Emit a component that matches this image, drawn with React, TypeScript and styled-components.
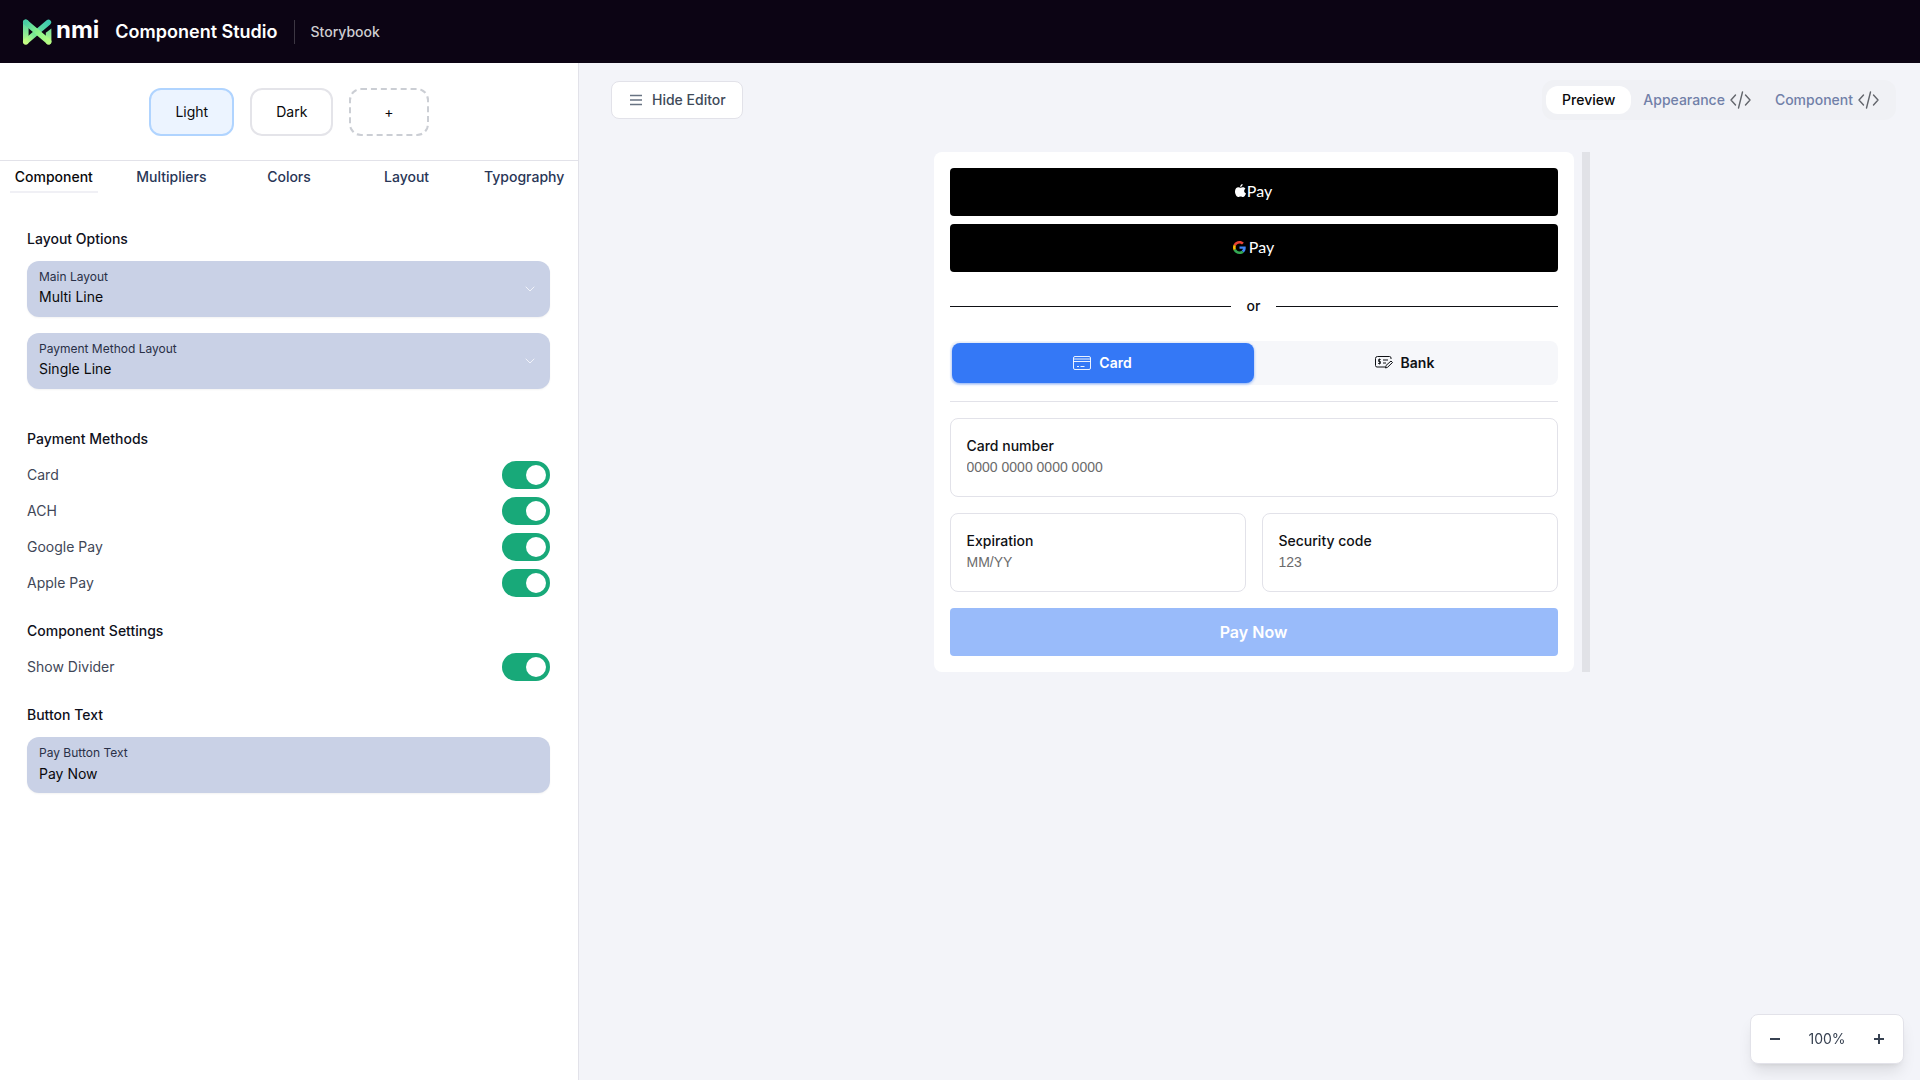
import React, { useState } from "react";
import styled, { createGlobalStyle, css } from "styled-components";

const GlobalStyle = createGlobalStyle`
  *, *::before, *::after { box-sizing: border-box; }
  body { margin: 0; background: #f3f4f9; color: #09090b; font: 400 14px/20px Inter, "Liberation Sans", sans-serif; }
  button, input, select { font: inherit; color: inherit; margin: 0; }
  button { cursor: pointer; }
`;

const Page = styled.div`
  min-height: 100vh;
  display: flex;
  flex-direction: column;
`;

const Header = styled.header`
  display: flex;
  align-items: center;
  height: 63px;
  padding: 0 22px;
  background: #0c0414;
  color: #fff;
`;

const Brand = styled.a`
  display: flex;
  align-items: center;
  gap: 2px;
  margin-right: 16px;
  color: inherit;
  text-decoration: none;
`;

const Wordmark = styled.span`
  margin-bottom: 4px;
  font-size: 24px;
  line-height: 28px;
  font-weight: 700;
`;

const Title = styled.h1`
  margin: 0;
  font-size: 18px;
  line-height: 28px;
  font-weight: 600;
`;

const HeaderLink = styled.a`
  margin-left: 16px;
  padding-left: 16px;
  line-height: 24px;
  border-left: 1px solid #3d3743;
  color: #cecdd0;
  font-weight: 500;
  text-decoration: none;
`;

const Body = styled.div`
  flex: 1;
  display: flex;
`;

const Editor = styled.aside`
  flex: none;
  width: 579px;
  background: #fff;
  border-right: 1px solid #e2e2e9;
`;

const Themes = styled.div`
  display: flex;
  justify-content: center;
  gap: 16px;
  padding: 25px 0 24px;
  border-bottom: 1px solid #e2e2e9;
`;

const ThemeButton = styled.button<{ $kind?: "active" | "add" }>`
  height: 48px;
  padding: 0 24px;
  border: 2px solid #e4e4e9;
  border-radius: 12px;
  background: #fff;
  ${(p) => p.$kind === "active" && css`border-color: #b0d4ff; background: #ecf4ff;`}
  ${(p) => p.$kind === "add" && css`border: 2px dashed #cbced4; padding: 0 33px;`}
`;

const Tabs = styled.nav`
  display: grid;
  grid-template-columns: repeat(5, 1fr);
  justify-items: center;
  margin: 0 -5px;
`;

const Tab = styled.button<{ $active?: boolean }>`
  padding: 6px 5px 4px;
  line-height: 20px;
  border: 0;
  border-bottom: 2px solid ${(p) => (p.$active ? "#f0f0f5" : "transparent")};
  background: none;
  color: ${(p) => (p.$active ? "#09090b" : "#293656")};
  font-weight: 500;
`;

const Settings = styled.div`
  padding: 36px 28px 0 27px;
`;

const Section = styled.section<{ $space?: number }>`
  margin-bottom: ${(p) => p.$space ?? 24}px;
`;

const SectionTitle = styled.h2`
  margin: 0 0 12px;
  font-size: 14px;
  line-height: 20px;
  font-weight: 500;
  color: #0f111c;
`;

const FieldBox = styled.div`
  display: grid;
  position: relative;
  height: 56px;
  margin-bottom: 16px;
  border-radius: 12px;
  background: #c9d1e6;
  box-shadow: 0 1px 2px #0000000d;

  label {
    grid-area: 1 / 1;
    padding: 8px 12px 0;
    font-size: 12px;
    line-height: 16px;
    color: #293047;
    pointer-events: none;
    z-index: 1;
  }
  select, input {
    grid-area: 1 / 1;
    width: 100%;
    height: 56px;
    padding: 16px 12px 0;
    border: 0;
    border-radius: 12px;
    background: transparent;
    appearance: none;
  }
  svg {
    grid-area: 1 / 1;
    place-self: center end;
    margin-right: 14px;
    pointer-events: none;
  }
`;

const SwitchRow = styled.label`
  display: flex;
  align-items: center;
  justify-content: space-between;
  height: 28px;
  margin-bottom: 8px;
  color: #3f4757;
`;

const Switch = styled.input`
  appearance: none;
  display: flex;
  justify-content: flex-start;
  align-items: center;
  width: 48px;
  height: 28px;
  padding: 4px;
  border-radius: 14px;
  background: #c9d1e6;
  cursor: pointer;
  &::before {
    content: "";
    width: 20px;
    height: 20px;
    border-radius: 50%;
    background: #fff;
  }
  &:checked { background: #18a979; justify-content: flex-end; }
`;

const Main = styled.main`
  flex: 1;
  min-width: 0;
  padding: 17px 24px 24px 32px;
  display: flex;
  flex-direction: column;
`;

const Toolbar = styled.div`
  display: flex;
  justify-content: space-between;
  align-items: center;
`;

const HideButton = styled.button`
  display: flex;
  align-items: center;
  gap: 8px;
  height: 38px;
  padding: 0 16px;
  border: 1px solid #e2e2e9;
  border-radius: 8px;
  background: #fff;
  color: #404a59;
  font-weight: 500;
`;

const Views = styled.div`
  display: flex;
  align-items: center;
  height: 40px;
  padding: 0 5px 0 4px;
  border-radius: 12px;
  background: #f0f1f5;
`;

const ViewButton = styled.button<{ $active?: boolean }>`
  display: flex;
  align-items: center;
  gap: 5px;
  height: 28px;
  padding: ${(p) => (p.$active ? "0 16px" : "0 12px")};
  border: 0;
  border-radius: 12px;
  background: ${(p) => (p.$active ? "#fff" : "none")};
  color: ${(p) => (p.$active ? "#09090b" : "#7180a8")};
  font-weight: 500;
`;

const Stage = styled.div`
  display: flex;
  justify-content: center;
  gap: 8px;
  margin: 32px 0 0 16px;
`;

const Checkout = styled.form`
  flex: 0 1 640px;
  padding: 16px;
  border-radius: 8px;
  background: #fff;
  color: #0f1115;
`;

const ResizeHandle = styled.div`
  width: 8px;
  background: #e1e2e7;
`;

const WalletButton = styled.button`
  display: flex;
  align-items: center;
  justify-content: center;
  gap: 3px;
  width: 100%;
  height: 48px;
  padding: 0 0 2px;
  margin-bottom: 8px;
  border: 0;
  border-radius: 4px;
  background: #000;
  color: #fff;
  font-family: Lato, "Liberation Sans", sans-serif;
  font-size: 16px;
`;

const AppleLabel = styled.span`
  display: flex;
  align-items: center;
  gap: 1px;
`;

const Divider = styled.div`
  display: flex;
  align-items: center;
  gap: 16px;
  height: 20px;
  margin: 24px 0 25px;
  font-weight: 500;
  &::before, &::after { content: ""; flex: 1; height: 1px; background: #0f1115; }
`;

const Methods = styled.div`
  display: grid;
  grid-template-columns: 1fr 1fr;
  height: 44px;
  padding: 2px;
  border-radius: 8px;
  background: #f6f7fa;
`;

const MethodButton = styled.button<{ $active?: boolean }>`
  display: flex;
  align-items: center;
  justify-content: center;
  gap: 8px;
  border: 0;
  border-radius: 8px;
  font-weight: 600;
  background: ${(p) => (p.$active ? "#3478f6" : "none")};
  color: ${(p) => (p.$active ? "#fff" : "#0f1115")};
  box-shadow: ${(p) => (p.$active ? "0 1px 3px #3478f699" : "none")};
`;

const Rule = styled.hr`
  margin: 16px 0;
  border: 0;
  height: 1px;
  background: #e2e2e9;
`;

const Fields = styled.div`
  display: grid;
  grid-template-columns: 1fr 1fr;
  gap: 16px;
  margin-bottom: 16px;
`;

const PaymentField = styled.label<{ $wide?: boolean }>`
  display: block;
  height: 79px;
  padding: 17px 16px 0;
  border: 1px solid #e2e2e9;
  border-radius: 8px;
  font-weight: 500;
  grid-column: ${(p) => (p.$wide ? "1 / -1" : "auto")};

  input {
    display: block;
    width: 100%;
    height: 21px;
    padding: 0;
    border: 0;
    outline: 0;
    background: none;
    font-family: "Liberation Sans", Arial, sans-serif;
    font-weight: 400;
  }
  input::placeholder { color: #6b6b6b; opacity: 1; }
`;

const PayButton = styled.button`
  display: block;
  width: 100%;
  height: 48px;
  border: 0;
  border-radius: 4px;
  background: #99bbfa;
  color: #fff;
  font-size: 16px;
  font-weight: 600;
`;

const Zoom = styled.div`
  position: fixed;
  right: 16px;
  bottom: 16px;
  display: flex;
  align-items: center;
  justify-content: space-between;
  width: 154px;
  height: 50px;
  padding: 0 8px;
  border: 1px solid #e2e2e9;
  border-radius: 8px;
  background: #fff;
  color: #374151;
  box-shadow: 0 10px 15px -3px #0000001a, 0 4px 6px -4px #0000001a;
`;

const ZoomButton = styled.button`
  display: grid;
  place-items: center;
  width: 32px;
  height: 32px;
  padding: 0;
  border: 0;
  background: none;
`;

const LogoMark = () => (
  <svg width="32" height="28" viewBox="0 0 32 28" aria-hidden="true">
    <defs>
      <linearGradient id="bar" gradientUnits="userSpaceOnUse" x1="0" y1="1" x2="0" y2="27">
        <stop offset="0" stopColor="#45cfa9" />
        <stop offset="1" stopColor="#c4fd82" />
      </linearGradient>
      <linearGradient id="rise" gradientUnits="userSpaceOnUse" x1="26" y1="4" x2="4" y2="24">
        <stop offset="0" stopColor="#3fcbb0" />
        <stop offset=".6" stopColor="#6fe597" />
        <stop offset="1" stopColor="#c4fd82" />
      </linearGradient>
      <linearGradient id="fall" gradientUnits="userSpaceOnUse" x1="4" y1="4" x2="27" y2="24">
        <stop offset="0" stopColor="#48cda6" />
        <stop offset=".5" stopColor="#8af58b" />
        <stop offset="1" stopColor="#b5fc83" />
      </linearGradient>
    </defs>
    <path d="M1 4.300a2.800 2.800 0 0 1 5.600 0v19.400a2.800 2.800 0 0 1-5.600 0Z" fill="url(#bar)" />
    <path d="M29.400 10.500v13.200a2.800 2.800 0 0 1-5.600 0v-9Z" fill="url(#bar)" />
    <path d="M3.800 23.700 26.400 4.300" stroke="url(#rise)" strokeWidth="5.500" strokeLinecap="round" />
    <path d="M3.800 4.300 26.600 23.700" stroke="url(#fall)" strokeWidth="5.500" strokeLinecap="round" />
  </svg>
);

const Chevron = () => (
  <svg width="12" height="12" viewBox="0 0 12 12" fill="none" stroke="#f1f3fa" strokeLinecap="round" strokeLinejoin="round">
    <path d="m2 4 4 4 4-4" />
  </svg>
);

const MenuIcon = () => (
  <svg width="16" height="16" viewBox="0 0 16 16" fill="none" stroke="#687382" strokeWidth="1.500">
    <path d="M2 3.500h12M2 8h12M2 12.500h12" />
  </svg>
);

const CodeIcon = () => (
  <svg width="21" height="18" viewBox="0 0 21 18" fill="none" stroke="#62656b" strokeWidth="1.400" strokeLinecap="round" strokeLinejoin="round">
    <path d="M5.500 4 1 9l4.500 5M15.500 4 20 9l-4.500 5M12.500 1l-4 16" />
  </svg>
);

const AppleIcon = () => (
  <svg width="11" height="14" viewBox="0 0 11 14" fill="#fff">
    <path d="M7.600 0C7.700 1.600 6.500 2.900 5.200 2.900 5.100 1.500 6.300.2 7.600 0ZM10.400 4.700C8.500 5.900 8.700 8.500 11 9.400 10.400 11.200 9.200 13 8 13c-1 0-1.300-.6-2.400-.6S4.200 13 3.200 13C1.700 13 0 10 0 7.500 0 3.500 3 2.400 5.600 3.800 7.300 2.800 9.200 3 10.400 4.700Z" />
  </svg>
);

const GoogleIcon = () => (
  <svg width="13" height="13" viewBox="0 0 48 48">
    <path fill="#EA4335" d="M24 9.500c3.540 0 6.710 1.220 9.210 3.600l6.850-6.850C35.900 2.380 30.470 0 24 0 14.620 0 6.510 5.380 2.560 13.220l7.980 6.190C12.430 13.720 17.740 9.500 24 9.500z" />
    <path fill="#4285F4" d="M46.980 24.550c0-1.570-.15-3.090-.38-4.550H24v9.020h12.940c-.58 2.960-2.260 5.480-4.780 7.180l7.730 6c4.510-4.180 7.090-10.360 7.090-17.650z" />
    <path fill="#FBBC05" d="M10.530 28.590c-.48-1.450-.76-2.990-.76-4.590s.27-3.140.76-4.590l-7.980-6.190C.92 16.460 0 20.120 0 24c0 3.880.92 7.540 2.560 10.780l7.970-6.190z" />
    <path fill="#34A853" d="M24 48c6.480 0 11.930-2.130 15.890-5.810l-7.730-6c-2.150 1.450-4.920 2.300-8.160 2.300-6.260 0-11.570-4.220-13.470-9.910l-7.980 6.190C6.510 42.620 14.620 48 24 48z" />
  </svg>
);

const CardIcon = () => (
  <svg width="18" height="16" viewBox="0 0 18 16" fill="none" stroke="currentColor" strokeWidth=".9">
    <rect x=".5" y="1.500" width="17" height="13" rx="1.500" />
    <path d="M.5 4h17M.5 6.500h17M4 11.500h2M7.500 11.500h4" />
  </svg>
);

const BankIcon = () => (
  <svg width="18" height="16" viewBox="0 0 18 16" fill="none" stroke="currentColor">
    <path d="M16 4V3a1.500 1.500 0 0 0-1.500-1.500h-12A2 2 0 0 0 .5 3.500v7a1.500 1.500 0 0 0 1.500 1.500h8M8 5h5M8 8h3" />
    <path d="M5.800 4.500H3.500v2h2v2H3M4.500 3.500v6" strokeWidth=".8" />
    <path d="m10.500 13 .5-2.500 5-4.500 1.500 1.500-5 4.800Z" />
  </svg>
);

type SelectFieldProps = { id: string; label: string; options: string[] };

const SelectField = ({ id, label, options }: SelectFieldProps) => (
  <FieldBox>
    <label htmlFor={id}>{label}</label>
    <select id={id}>
      {options.map((o) => <option key={o}>{o}</option>)}
    </select>
    <Chevron />
  </FieldBox>
);

const Toggle = ({ label }: { label: string }) => (
  <SwitchRow>
    {label}
    <Switch type="checkbox" role="switch" defaultChecked />
  </SwitchRow>
);

export default function App() {
  const [payText, setPayText] = useState("Pay Now");
  const [zoom, setZoom] = useState(100);

  return (
    <Page>
      <GlobalStyle />
      <Header>
        <Brand href="#"><LogoMark /><Wordmark>nmi</Wordmark></Brand>
        <Title>Component Studio</Title>
        <HeaderLink href="#storybook">Storybook</HeaderLink>
      </Header>
      <Body>
        <Editor>
          <Themes>
            <ThemeButton $kind="active">Light</ThemeButton>
            <ThemeButton>Dark</ThemeButton>
            <ThemeButton $kind="add">+</ThemeButton>
          </Themes>
          <Tabs>
            {["Component", "Multipliers", "Colors", "Layout", "Typography"].map((t, i) => (
              <Tab key={t} $active={i === 0}>{t}</Tab>
            ))}
          </Tabs>
          <Settings>
            <Section $space={40}>
              <SectionTitle>Layout Options</SectionTitle>
              <SelectField id="main-layout" label="Main Layout" options={["Multi Line", "Single Line"]} />
              <SelectField id="method-layout" label="Payment Method Layout" options={["Single Line", "Multi Line"]} />
            </Section>
            <Section>
              <SectionTitle>Payment Methods</SectionTitle>
              {["Card", "ACH", "Google Pay", "Apple Pay"].map((m) => <Toggle key={m} label={m} />)}
            </Section>
            <Section>
              <SectionTitle>Component Settings</SectionTitle>
              <Toggle label="Show Divider" />
            </Section>
            <Section>
              <SectionTitle>Button Text</SectionTitle>
              <FieldBox>
                <label htmlFor="pay-text">Pay Button Text</label>
                <input id="pay-text" value={payText} onChange={(e) => setPayText(e.target.value)} />
              </FieldBox>
            </Section>
          </Settings>
        </Editor>
        <Main>
          <Toolbar>
            <HideButton><MenuIcon />Hide Editor</HideButton>
            <Views>
              <ViewButton $active>Preview</ViewButton>
              <ViewButton>Appearance <CodeIcon /></ViewButton>
              <ViewButton>Component <CodeIcon /></ViewButton>
            </Views>
          </Toolbar>
          <Stage>
            <Checkout onSubmit={(e) => e.preventDefault()}>
              <WalletButton type="button"><AppleLabel><AppleIcon />Pay</AppleLabel></WalletButton>
              <WalletButton type="button"><GoogleIcon />Pay</WalletButton>
              <Divider>or</Divider>
              <Methods>
                <MethodButton type="button" $active><CardIcon />Card</MethodButton>
                <MethodButton type="button"><BankIcon />Bank</MethodButton>
              </Methods>
              <Rule />
              <Fields>
                <PaymentField $wide>Card number<input placeholder="0000 0000 0000 0000" /></PaymentField>
                <PaymentField>Expiration<input placeholder="MM/YY" /></PaymentField>
                <PaymentField>Security code<input placeholder="123" /></PaymentField>
              </Fields>
              <PayButton>{payText}</PayButton>
            </Checkout>
            <ResizeHandle />
          </Stage>
        </Main>
      </Body>
      <Zoom>
        <ZoomButton aria-label="Zoom out" onClick={() => setZoom(zoom - 10)}>
          <svg width="12" height="12" stroke="currentColor" strokeWidth="2"><path d="M1 6h10" /></svg>
        </ZoomButton>
        {zoom}%
        <ZoomButton aria-label="Zoom in" onClick={() => setZoom(zoom + 10)}>
          <svg width="12" height="12" stroke="currentColor" strokeWidth="2"><path d="M1 6h10M6 1v10" /></svg>
        </ZoomButton>
      </Zoom>
    </Page>
  );
}
